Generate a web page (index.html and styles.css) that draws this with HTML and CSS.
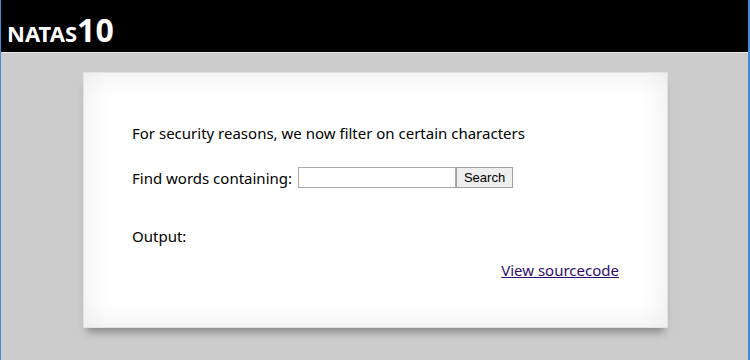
FILE: index.html
```html
<!DOCTYPE html>
<html lang="en">
<head>
    <meta charset="UTF-8">
    <title>natas10</title>
    <link rel="stylesheet" href="styles.css">
</head>
<body>
    <div class="frame">
        <h1 class="banner">NATAS<span class="level">10</span></h1>

        <div class="content">
            <p class="intro">For security reasons, we now filter on certain characters</p>

            <form class="search-form">
                <label class="search-label">Find words containing:</label>
                <input class="search-input" type="text" name="needle">
                <input class="search-button" type="submit" value="Search">
            </form>

            <p class="output">Output:</p>

            <div class="source-link"><a href="#">View sourcecode</a></div>
        </div>
    </div>
</body>
</html>
```

FILE: styles.css
```css
/* === BASE === */
html, body {
    margin: 0;
    padding: 0;
    height: 100%;
}

body {
    font-family: 'Noto Sans', sans-serif;
    background-color: #ccc;
    color: #000;
}

.frame {
    min-height: 100%;
    box-sizing: border-box;
    border-left: 1px solid #3c8fd8;
    border-right: 2px solid #3c8fd8;
}

/* === BANNER "NATAS10" === */
.banner {
    margin: 0;
    height: 53px;
    box-sizing: border-box;
    padding: 14px 0 0 6px;
    background-color: #000;
    border-bottom: 1px solid #e6e6e6;
    color: #fff;
    font-size: 22px;
    font-weight: bold;
    line-height: 1;
}

.level {
    font-size: 32px;
}

/* === CONTENT BOX === */
.content {
    width: 585px;
    margin: 19px 0 0 82px;
    box-sizing: border-box;
    padding: 50px 48px 47px 48px;
    background-color: #fff;
    border: 1px solid #e2e2e2;
    box-shadow: inset 0 0 30px #e8e8e8, 0 8px 8px -4px rgba(0, 0, 0, 0.35);
    font-size: 15px;
}

.intro {
    margin: 0 0 24px;
}

.search-form {
    display: flex;
    align-items: center;
    margin: 0;
}

.search-label {
    margin-right: 6px;
}

.search-input {
    width: 158px;
    height: 21px;
    box-sizing: border-box;
    margin: 0;
    border: 1px solid #a9a9a9;
    padding: 1px 2px;
}

.search-button {
    width: 57px;
    height: 21px;
    box-sizing: border-box;
    margin: 0;
    padding: 0;
    border: 1px solid #a0a0a0;
    border-radius: 0;
    background-color: #eee;
    font-family: 'Liberation Sans', sans-serif;
    font-size: 13px;
    color: #000;
}

.output {
    margin: 38px 0 14px;
}

.source-link {
    text-align: right;
}

.source-link a {
    color: #2e0e6a;
}
```
